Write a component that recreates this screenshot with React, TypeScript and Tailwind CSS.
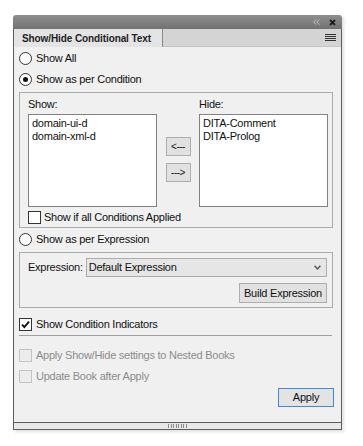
import React from "react";

function Radio({ checked }: { checked?: boolean }) {
  return (
    <span className="flex h-[13px] w-[13px] shrink-0 items-center justify-center rounded-full border border-[#333] bg-white">
      {checked && <span className="h-[5px] w-[5px] rounded-full bg-[#111]" />}
    </span>
  );
}

function Check({ checked, disabled }: { checked?: boolean; disabled?: boolean }) {
  return (
    <span
      className={
        disabled
          ? "flex h-[13px] w-[13px] shrink-0 border border-[#c4c4c4] bg-[#ececec]"
          : "flex h-[13px] w-[13px] shrink-0 items-center justify-center border border-[#333] bg-white"
      }
    >
      {checked && (
        <svg width="9" height="9" viewBox="0 0 9 9">
          <path d="M1 4.6 L3.4 7 L8 1.6" fill="none" stroke="#111" strokeWidth="1.9" />
        </svg>
      )}
    </span>
  );
}

function SmallButton({ label }: { label: string }) {
  return (
    <div className="flex h-[19px] w-[25px] items-center justify-center border border-[#adadad] bg-[#e1e1e1] text-[10px] leading-none tracking-[-0.5px]">
      {label}
    </div>
  );
}

function ListBox({ items }: { items: string[] }) {
  return (
    <div className="h-[93px] border border-[#828282] bg-white pl-[3px] pt-[2px] leading-[13px]">
      {items.map((item) => (
        <div key={item}>{item}</div>
      ))}
    </div>
  );
}

export default function App() {
  return (
    <div
      className="min-h-screen bg-white pl-[13px] pt-[15px] text-[11px] tracking-[-0.25px] text-[#111]"
      style={{ fontFamily: '"Liberation Sans", Arial, sans-serif' }}
    >
      <div className="flex h-[415px] w-[329px] flex-col shadow-[2px_2px_3px_rgba(0,0,0,0.12)]">
        {/* Title bar */}
        <div className="flex h-[14px] items-center justify-end gap-[9px] rounded-t-[3px] bg-gradient-to-b from-[#8e8e8e] to-[#727272] pr-[6px]">
          <svg width="7" height="6" viewBox="0 0 7 6">
            <path d="M3 0.5 L0.8 3 L3 5.5 M6.2 0.5 L4 3 L6.2 5.5" fill="none" stroke="#c4c4c4" strokeWidth="1" />
          </svg>
          <svg width="7" height="7" viewBox="0 0 7 7">
            <path d="M1 1 L6 6 M6 1 L1 6" fill="none" stroke="#1e1e1e" strokeWidth="1.8" />
          </svg>
        </div>

        {/* Tab row */}
        <div className="flex h-[18px] border-x border-[#5c5c5c] bg-[#d4d4d4]">
          <div className="flex w-[149px] items-center whitespace-nowrap border-r border-[#8a8a8a] bg-[#e4e4e4] pl-[8px] text-[10px] font-bold tracking-[-0.1px] text-[#222]">
            Show/Hide Conditional Text
          </div>
          <div className="flex flex-1 items-center justify-end border-b border-[#c4c4c4] pr-[5px]">
            <div className="flex w-[11px] flex-col gap-[1px]">
              <span className="h-px bg-[#333]" />
              <span className="h-px bg-[#333]" />
              <span className="h-px bg-[#333]" />
              <span className="h-px bg-[#333]" />
            </div>
          </div>
        </div>

        {/* Content */}
        <div className="flex flex-1 flex-col border-x border-[#5c5c5c] bg-[#f0f0f0] pl-[5px] pr-[8px] pt-[1px]">
          <label className="flex h-[21px] items-center gap-[4px]">
            <Radio />
            <span>Show All</span>
          </label>
          <label className="flex h-[21px] items-center gap-[4px]">
            <Radio checked />
            <span>Show as per Condition</span>
          </label>

          <div className="mt-[2px] flex h-[136px] flex-col border border-[#acacac] pl-[8px] pr-[4px] pt-[4px]">
            <div className="grid grid-cols-[129px_42px_129px]">
              <div className="flex h-[14px] items-center">Show:</div>
              <div />
              <div className="flex h-[14px] items-center">Hide:</div>
            </div>
            <div className="mt-[3px] grid grid-cols-[129px_42px_129px]">
              <ListBox items={["domain-ui-d", "domain-xml-d"]} />
              <div className="flex flex-col items-center gap-[7px] pt-[23px]">
                <SmallButton label="<---" />
                <SmallButton label="--->" />
              </div>
              <ListBox items={["DITA-Comment", "DITA-Prolog"]} />
            </div>
            <label className="mt-[3px] flex h-[14px] items-center gap-[3px]">
              <Check />
              <span>Show if all Conditions Applied</span>
            </label>
          </div>

          <label className="flex h-[22px] items-center gap-[4px]">
            <Radio />
            <span>Show as per Expression</span>
          </label>

          <div className="mt-[2px] flex h-[56px] flex-col border border-[#acacac] pl-[8px] pr-[5px] pt-[5px]">
            <div className="flex h-[19px] items-center gap-[3px]">
              <span>Expression:</span>
              <div className="flex h-[19px] flex-1 items-center justify-between border border-[#acacac] bg-[#e6e6e6] pl-[2px] pr-[5px]">
                <span>Default Expression</span>
                <svg width="7" height="5" viewBox="0 0 7 5">
                  <path d="M0.6 0.8 L3.5 4 L6.4 0.8" fill="none" stroke="#555" strokeWidth="1.4" />
                </svg>
              </div>
            </div>
            <div className="mt-[6px] flex justify-end">
              <div className="flex h-[20px] w-[88px] items-center justify-center border border-[#adadad] bg-[#e1e1e1]">
                Build Expression
              </div>
            </div>
          </div>

          <label className="mt-[6px] flex h-[21px] items-center gap-[4px]">
            <Check checked />
            <span>Show Condition Indicators</span>
          </label>
          <div className="h-px w-[313px] bg-[#a0a0a0]" />

          <label className="mt-[9px] flex h-[21px] items-center gap-[4px] text-[#8c8c8c]">
            <Check disabled />
            <span>Apply Show/Hide settings to Nested Books</span>
          </label>
          <label className="flex h-[21px] items-center gap-[4px] text-[#8c8c8c]">
            <Check disabled />
            <span>Update Book after Apply</span>
          </label>

          <div className="mr-[-1px] mt-[1px] flex justify-end">
            <div className="flex h-[19px] w-[56px] items-center justify-center border border-[#3d8ad6] bg-[#e3e3e3]">
              Apply
            </div>
          </div>
        </div>

        {/* Resize grip */}
        <div className="flex h-[8px] items-center justify-center border border-[#5c5c5c] bg-[#e8e8e8]">
          <div className="flex gap-[1.5px]">
            {[0, 1, 2, 3, 4, 5, 6, 7].map((i) => (
              <span key={i} className="h-[4px] w-px bg-[#8a8a8a]" />
            ))}
          </div>
        </div>
      </div>
    </div>
  );
}
